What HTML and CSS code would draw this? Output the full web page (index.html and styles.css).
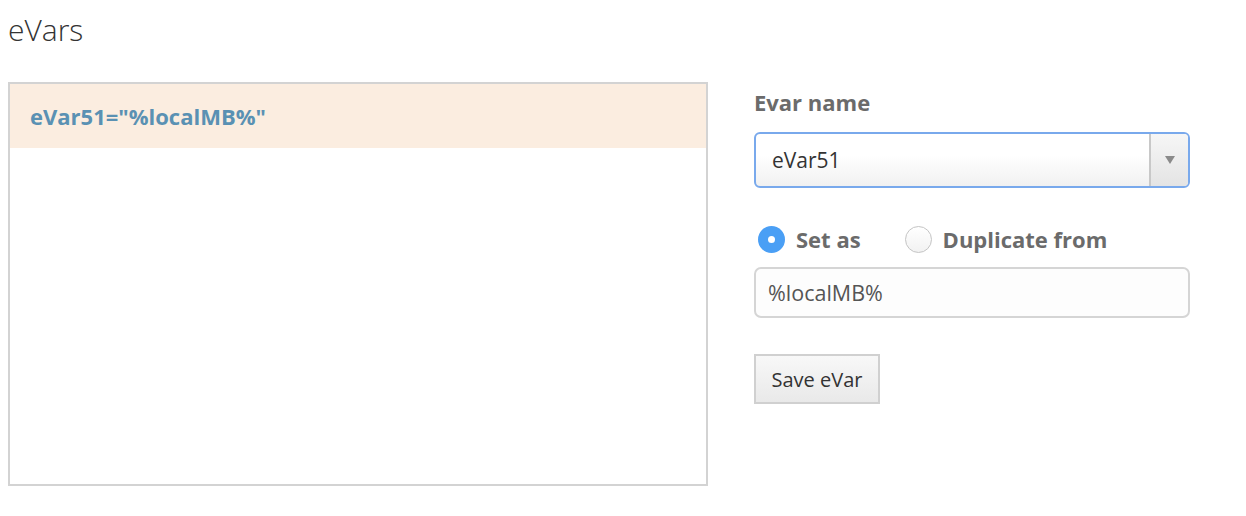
FILE: index.html
```html
<!DOCTYPE html>
<html>
<head>
<meta charset="utf-8">
<link rel="stylesheet" href="styles.css">
</head>
<body>
<h1 class="title">eVars</h1>
<div class="main">
  <div class="list">
    <div class="list-item selected">eVar51="%localMB%"</div>
  </div>
  <div class="panel">
    <div class="label">Evar name</div>
    <div class="select">
      <span class="select-value">eVar51</span>
      <span class="select-btn"><svg width="10" height="8" viewBox="0 0 10 8"><path d="M0 0H10L5 8Z" fill="#8a8a8a"/></svg></span>
    </div>
    <div class="radios">
      <label class="radio"><span class="dot checked"></span>Set as</label>
      <label class="radio"><span class="dot"></span>Duplicate from</label>
    </div>
    <div class="textinput">%localMB%</div>
    <button class="btn">Save eVar</button>
  </div>
</div>
</body>
</html>
```
FILE: styles.css
```css
html, body {
  margin: 0;
  padding: 0;
  background: #fff;
}
body {
  font-family: "Open Sans", "Liberation Sans", sans-serif;
  color: #333;
}
.title {
  margin: 0;
  padding: 10px 0 0 8px;
  height: 40px;
  font-size: 30px;
  font-weight: 300;
  line-height: 40px;
  color: #333;
}
.main {
  display: flex;
  margin-top: 32px;
  padding-left: 8px;
  gap: 46px;
}
.list {
  width: 696px;
  height: 400px;
  border: 2px solid #d3d3d3;
  background: #fff;
}
.list-item {
  height: 64px;
  display: flex;
  align-items: center;
  padding-left: 20px;
  font-size: 22px;
  font-weight: 700;
  color: #5a91b3;
}
.list-item.selected {
  background: #fbede0;
}
.panel {
  width: 436px;
  display: flex;
  flex-direction: column;
  padding-top: 6px;
}
.label {
  font-size: 22px;
  font-weight: 700;
  color: #6b6b6b;
  line-height: 28px;
}
.select {
  margin-top: 16px;
  height: 52px;
  border: 2px solid #79a9ec;
  border-radius: 6px;
  display: flex;
  align-items: stretch;
  background: linear-gradient(#fff 40%, #f1f1f1);
  box-sizing: content-box;
  width: 432px;
}
.select-value {
  flex: 1;
  display: flex;
  align-items: center;
  padding-left: 16px;
  font-size: 21px;
  color: #333;
}
.select-btn {
  width: 37px;
  border-left: 2px solid #c8c8c8;
  display: flex;
  align-items: center;
  justify-content: center;
  background: linear-gradient(#f6f6f6, #e4e4e4);
  border-radius: 0 4px 4px 0;
}
.radios {
  display: flex;
  gap: 44px;
  margin-top: 35px;
  padding-left: 4px;
  height: 32px;
  align-items: center;
}
.radio {
  display: flex;
  align-items: center;
  gap: 11px;
  font-size: 22px;
  font-weight: 700;
  color: #6b6b6b;
}
.dot {
  width: 27px;
  height: 27px;
  border-radius: 50%;
  border: 1px solid #c4c4c4;
  background: linear-gradient(#fff, #f2f2f2);
  box-sizing: border-box;
  position: relative;
}
.dot.checked {
  border: none;
  background: #4a9ff5;
}
.dot.checked::after {
  content: "";
  position: absolute;
  left: 10px;
  top: 10px;
  width: 7px;
  height: 7px;
  border-radius: 50%;
  background: #fff;
}
.textinput {
  margin-top: 12px;
  height: 47px;
  border: 2px solid #d5d5d5;
  border-radius: 7px;
  display: flex;
  align-items: center;
  padding-left: 12px;
  font-size: 21.5px;
  color: #555;
  background: #fdfdfd;
}
.btn {
  align-self: flex-start;
  margin-top: 36px;
  width: 126px;
  height: 50px;
  border: 2px solid #d0d0d0;
  border-radius: 0;
  background: linear-gradient(#f8f8f8, #e9e9e9);
  font-family: "Open Sans", "Liberation Sans", sans-serif;
  font-size: 20px;
  color: #333;
  padding: 0;
}
```
